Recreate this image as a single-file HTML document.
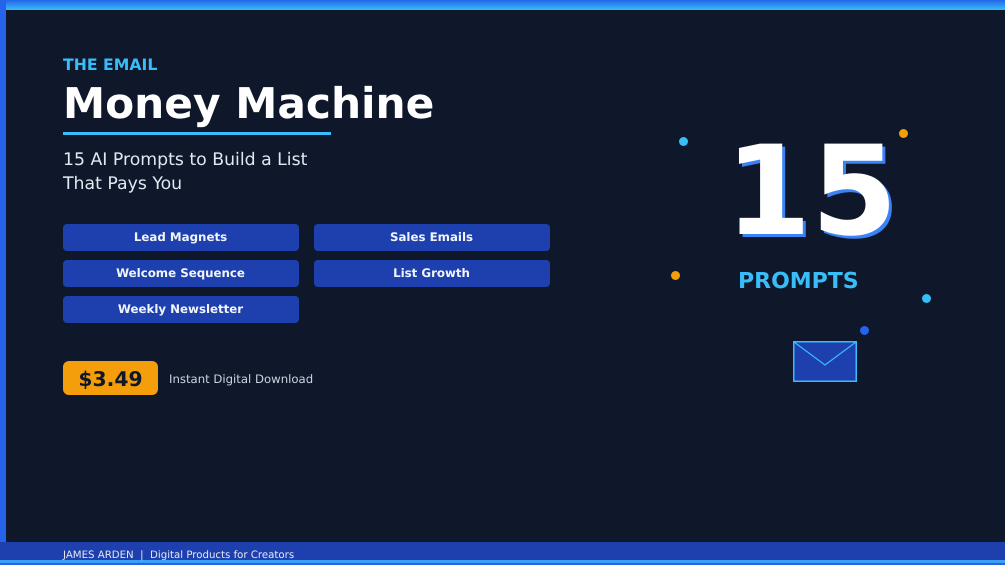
<!DOCTYPE html>
<html><head><meta charset="utf-8"><style>
html,body{margin:0;padding:0;background:#0f172a}
#p{position:relative;width:1005px;height:565px;overflow:hidden;background:#0f172a;font-family:"DejaVu Sans",sans-serif;text-rendering:geometricPrecision}
#p div{position:absolute;white-space:nowrap}
.b{width:235px;padding-right:1px;height:27.6px;background:#1e40af;border-radius:4px;color:#f1f5f9;font-weight:700;font-size:11.8px;line-height:27.6px;text-align:center}
.d{border-radius:50%;width:9px;height:9px}
</style></head><body><div id="p">
<div style="left:0;top:0;width:1005px;height:10px;background:linear-gradient(#2563eb,#38bdf8)"></div>
<div style="left:0;top:0;width:6px;height:565px;background:#2563eb"></div>
<div style="left:63px;top:55px;font-size:15.7px;line-height:19px;font-weight:700;color:#38bdf8">THE EMAIL</div>
<div style="left:63px;top:78.4px;font-size:42.3px;line-height:52px;font-weight:700;color:#fff">Money Machine</div>
<div style="left:63px;top:132px;width:268px;height:3.4px;background:#38bdf8"></div>
<div style="left:63px;top:149px;font-size:17.3px;line-height:23.6px;color:#e2e8f0">15 AI Prompts to Build a List<br>That Pays You</div>
<div class="b" style="left:63px;top:223.5px">Lead Magnets</div>
<div class="b" style="left:314px;top:223.5px">Sales Emails</div>
<div class="b" style="left:63px;top:259.6px">Welcome Sequence</div>
<div class="b" style="left:314px;top:259.6px">List Growth</div>
<div class="b" style="left:63px;top:295.7px">Weekly Newsletter</div>
<div style="left:63px;top:361px;width:95px;height:34px;background:#f59e0b;border-radius:6px;color:#0f172a;font-weight:700;font-size:20.3px;line-height:36px;text-align:center">$3.49</div>
<div style="left:169px;top:371px;font-size:11.7px;line-height:16px;color:#cbd5e1">Instant Digital Download</div>
<div style="left:725px;top:119.2px;font-size:124px;line-height:146px;font-weight:700;color:#fff;text-shadow:3px 3px 0 #3b82f6">15</div>
<div style="left:738px;top:269px;font-size:22px;line-height:26px;font-weight:700;color:#38bdf8">PROMPTS</div>
<div class="d" style="left:679px;top:137px;background:#38bdf8"></div>
<div class="d" style="left:899px;top:129px;background:#f59e0b"></div>
<div class="d" style="left:671px;top:271px;background:#f59e0b"></div>
<div class="d" style="left:922px;top:294px;background:#38bdf8"></div>
<div class="d" style="left:860px;top:326px;background:#2563eb"></div>
<svg style="position:absolute;left:793px;top:341px" width="64" height="41" viewBox="0 0 64 41"><rect x=".75" y=".75" width="62.5" height="39.5" fill="#1e40af" stroke="#38bdf8" stroke-width="1.5"/><path d="M1 1L32 24L63 1" fill="none" stroke="#38bdf8" stroke-width="1.2"/></svg>
<div style="left:0;top:541.5px;width:1005px;height:24px;background:#1e40af"></div>
<div style="left:0;top:563px;width:1005px;height:2px;background:#2563eb"></div>
<div style="left:0;top:560px;width:1005px;height:3px;background:#3b9ff8"></div>
<div style="left:63px;top:549px;font-size:10.2px;line-height:14px;color:#e2e8f0">JAMES ARDEN &nbsp;|&nbsp; Digital Products for Creators</div>
</div></body></html>
